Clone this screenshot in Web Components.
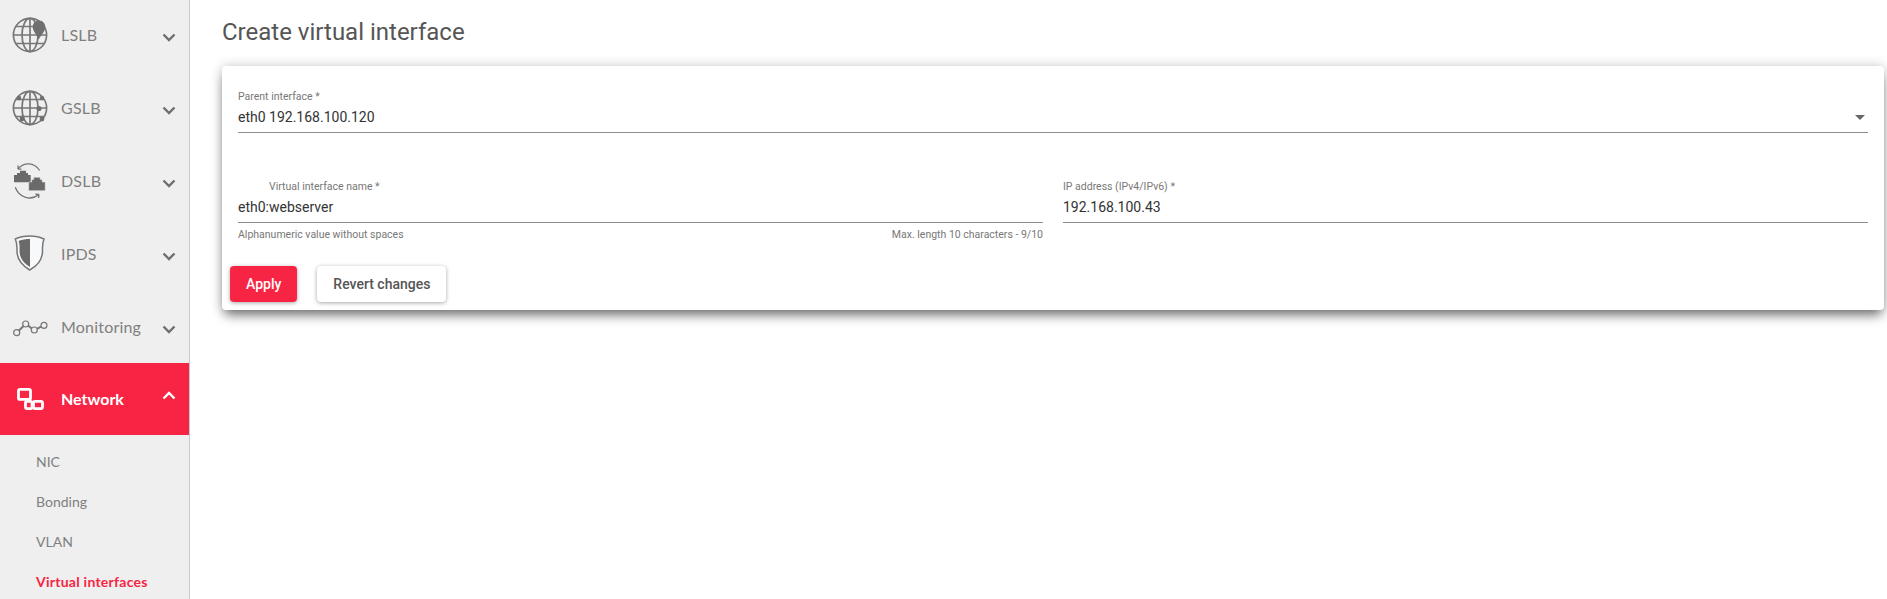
<!DOCTYPE html>
<html><head><meta charset="utf-8">
<style>
html,body{margin:0;padding:0;height:599px;overflow:hidden;background:#fff}
</style></head>
<body>
<app-shell>
  <side-nav slot="nav">
    <nav-item label="LSLB" icon="lslb"></nav-item>
    <nav-item label="GSLB" icon="gslb"></nav-item>
    <nav-item label="DSLB" icon="dslb"></nav-item>
    <nav-item label="IPDS" icon="ipds"></nav-item>
    <nav-item label="Monitoring" icon="mon"></nav-item>
    <nav-item label="Network" icon="net" active></nav-item>
    <sub-list>
      <sub-item>NIC</sub-item>
      <sub-item>Bonding</sub-item>
      <sub-item>VLAN</sub-item>
      <sub-item current>Virtual interfaces</sub-item>
    </sub-list>
  </side-nav>
  <page-main slot="main" heading="Create virtual interface">
    <form-card>
      <form-field label="Parent interface *" value="eth0 192.168.100.120" select></form-field>
      <form-field slot="row" label="Virtual interface name *" value="eth0:webserver" indent hint="Alphanumeric value without spaces" count="Max. length 10 characters - 9/10"></form-field>
      <form-field slot="row" label="IP address (IPv4/IPv6) *" value="192.168.100.43"></form-field>
      <ui-button slot="actions" primary>Apply</ui-button>
      <ui-button slot="actions">Revert changes</ui-button>
    </form-card>
  </page-main>
</app-shell>
<script>
const globe = `<circle cx="18" cy="18" r="16.6"/><ellipse cx="18" cy="18" rx="8" ry="16.6"/><path d="M18 1.4V34.6M1.6 18H34.4M4 9.5H32M4 26.5H32"/>`;
const ICONS = {
  lslb:`<g fill="none" stroke="#777" stroke-width="1.7">${globe}</g><path d="M27.500 3.500c-4.400 0-6.800 3.300-6.800 6.600 0 4.200 4 7.800 6 12.600 2.400-4.800 6.600-8.200 6.600-12.600 0-3.600-2.600-6.600-5.800-6.600z" fill="#6f6f6f"/>`,
  gslb:`<g fill="none" stroke="#777" stroke-width="1.7">${globe}</g><g fill="#6f6f6f"><circle cx="7" cy="8" r="2.200"/><circle cx="30" cy="8" r="2.200"/><circle cx="27" cy="18.500" r="2.600"/><circle cx="10" cy="29" r="2.400"/><circle cx="30" cy="29" r="2.400"/></g>`,
  dslb:`<g fill="none" stroke="#777" stroke-width="1.300"><path d="M6 6C12 -1 22 -1 27.700 7.500"/><path d="M6 6l.2-3.600M6 6l3.500.2"/><path d="M3.300 24.300C7 35 19 38 27 31.500"/><path d="M27 31.500l-3.700-.4M27 31.500l-.4 3.500"/></g><path d="M2 12h3v-2h3V7.700h6V10h2v2h2.700v7.300H2z" fill="#6a6a6a"/><path d="M16.700 19h3v-2.500h2v-2.200h6.500v2.200h2V19h3v8.700H16.700z" fill="#6a6a6a" stroke="#efefef" stroke-width=".5"/>`,
  ipds:`<path d="M18 0C24 0 28 1 32 3 30 8 30.500 11 30.500 15 30.500 24 25 30 17.700 34 11 30 5 24 5 15 5 11 5.500 8 3.300 3 7 1 12 0 18 0z" fill="#f8f9fb" stroke="#777" stroke-width="1.500"/><path d="M18 3C14 3 10 3.500 6.500 5 8 9 7.500 12 7.500 15 7.500 22 12 27.500 18 31z" fill="#6a6a6a"/>`,
  mon:`<g fill="none" stroke="#777"><path d="M6.800 21.700L11.500 17M16 16.500L19.800 19.500M25 19.800L29 17.700" stroke-width="2"/><g stroke-width="1.200"><circle cx="4.700" cy="23.700" r="3"/><circle cx="13.700" cy="15" r="3"/><circle cx="22.300" cy="21" r="3"/><circle cx="32" cy="16.300" r="3"/></g></g>`,
  net:`<g fill="none" stroke="#fff" stroke-width="2.800"><rect x="6.500" y="8.400" width="12" height="10" rx="1.500"/><rect x="13.500" y="20.400" width="6.500" height="7.200" rx="1.500"/><rect x="21.500" y="20.400" width="9" height="7.200" rx="1.500"/></g>`
};
function def(name, css, html){
  customElements.define(name, class extends HTMLElement{
    constructor(){super();this.attachShadow({mode:'open'});}
    connectedCallback(){
      const a=n=>this.getAttribute(n), h=n=>this.hasAttribute(n);
      this.shadowRoot.innerHTML=`<style>${css}</style>`+(typeof html==='function'?html(a,h):html);
    }
  });
}
def('app-shell',`:host{display:grid;grid-template-columns:190px 1fr;height:599px;overflow:hidden}`,
  `<slot name="nav"></slot><slot name="main"></slot>`);
def('side-nav',`:host{display:block;background:#efefef;border-right:1px solid #c9c9c9;box-sizing:border-box;height:599px;overflow:hidden}
  .in{margin-top:-2px}`,`<div class="in"><slot></slot></div>`);
def('nav-item',`:host{display:flex;align-items:center;height:73px;padding-left:12px;padding-right:12px;font:400 16px/1 "Lato","Open Sans",sans-serif;color:#808080;letter-spacing:.2px}
  :host([active]){background:#f82443;color:#fff;font-weight:700;height:72px;letter-spacing:0}
  svg.i{width:36px;height:36px;flex:none;margin-right:13px;overflow:visible}
  .l{flex:1}
  svg.c{width:16px;height:16px;flex:none;fill:none;stroke:#6f6f6f;stroke-width:2.400;margin-top:4px}
  :host([active]) svg.c{stroke:#fff;margin-top:-7px}`,
  (a,h)=>`<svg class="i" viewBox="0 0 36 36">${ICONS[a('icon')]}</svg><span class="l">${a('label')}</span>
  <svg class="c" viewBox="0 0 16 16"><path d="${h('active')?'M2.500 10.500L8 5 13.500 10.500':'M2.500 5.500L8 11 13.500 5.500'}"/></svg>`);
def('sub-list',`:host{display:block;padding-top:7px}`,`<slot></slot>`);
def('sub-item',`:host{display:flex;align-items:center;height:40px;padding-left:36px;font:400 14px/1 "Lato","Open Sans",sans-serif;color:#808080}
  :host([current]){color:#f82443;font-weight:700;letter-spacing:.25px}`,`<slot></slot>`);
def('page-main',`:host{display:block;padding:0 3px 0 32px;min-width:0}
  h1{font:400 24px/28px Roboto,sans-serif;color:#555;margin:0;padding:18px 0 20px}`,
  (a)=>`<h1>${a('heading')}</h1><slot></slot>`);
def('form-card',`:host{display:block;background:#fff;border-radius:4px;height:244px;box-sizing:border-box;padding:23px 16px 0;
    box-shadow:0 8px 12px -3px rgba(0,0,0,.5),0 0 12px rgba(0,0,0,.22)}
  .row{display:grid;grid-template-columns:1fr 1fr;gap:20px;margin-top:46px}
  .acts{display:flex;gap:20px;margin-left:-8px}
  `,`<slot></slot><div class="row"><slot name="row"></slot></div><div class="acts"><slot name="actions"></slot></div>`);
def('form-field',`:host{display:block;font-family:Roboto,sans-serif;min-width:0}
  label{display:block;font-size:10.500px;line-height:14px;color:#777;padding-top:1px}
  :host([indent]) label{padding-left:31px}
  .v{font-size:14px;line-height:20px;color:#333;padding:3px 0 5px;border-bottom:1px solid #8c8c8c;display:flex;justify-content:space-between;align-items:center}
  .h{display:flex;justify-content:space-between;font-size:10.500px;line-height:14px;color:#777;margin-top:5px;height:38px}
  svg{width:10px;height:5px;margin-right:3px;flex:none}`,
  (a,h)=>`<label>${a('label')}</label><div class="v"><span>${a('value')}</span>${h('select')?'<svg viewBox="0 0 10 5"><path d="M0 0h10L5 5z" fill="#666"/></svg>':''}</div>`+
  (a('hint')?`<div class="h"><span>${a('hint')}</span><span>${a('count')}</span></div>`:'')
);
def('ui-button',`:host{display:inline-flex;align-items:center;justify-content:center;height:36px;padding:0 16px;border-radius:4px;background:#fff;color:#555;font:500 14px/1 Roboto,sans-serif;box-shadow:0 1px 4px rgba(0,0,0,.35)}
  :host([primary]){background:#f82443;color:#fff}`,`<slot></slot>`);
</script>
</body></html>
